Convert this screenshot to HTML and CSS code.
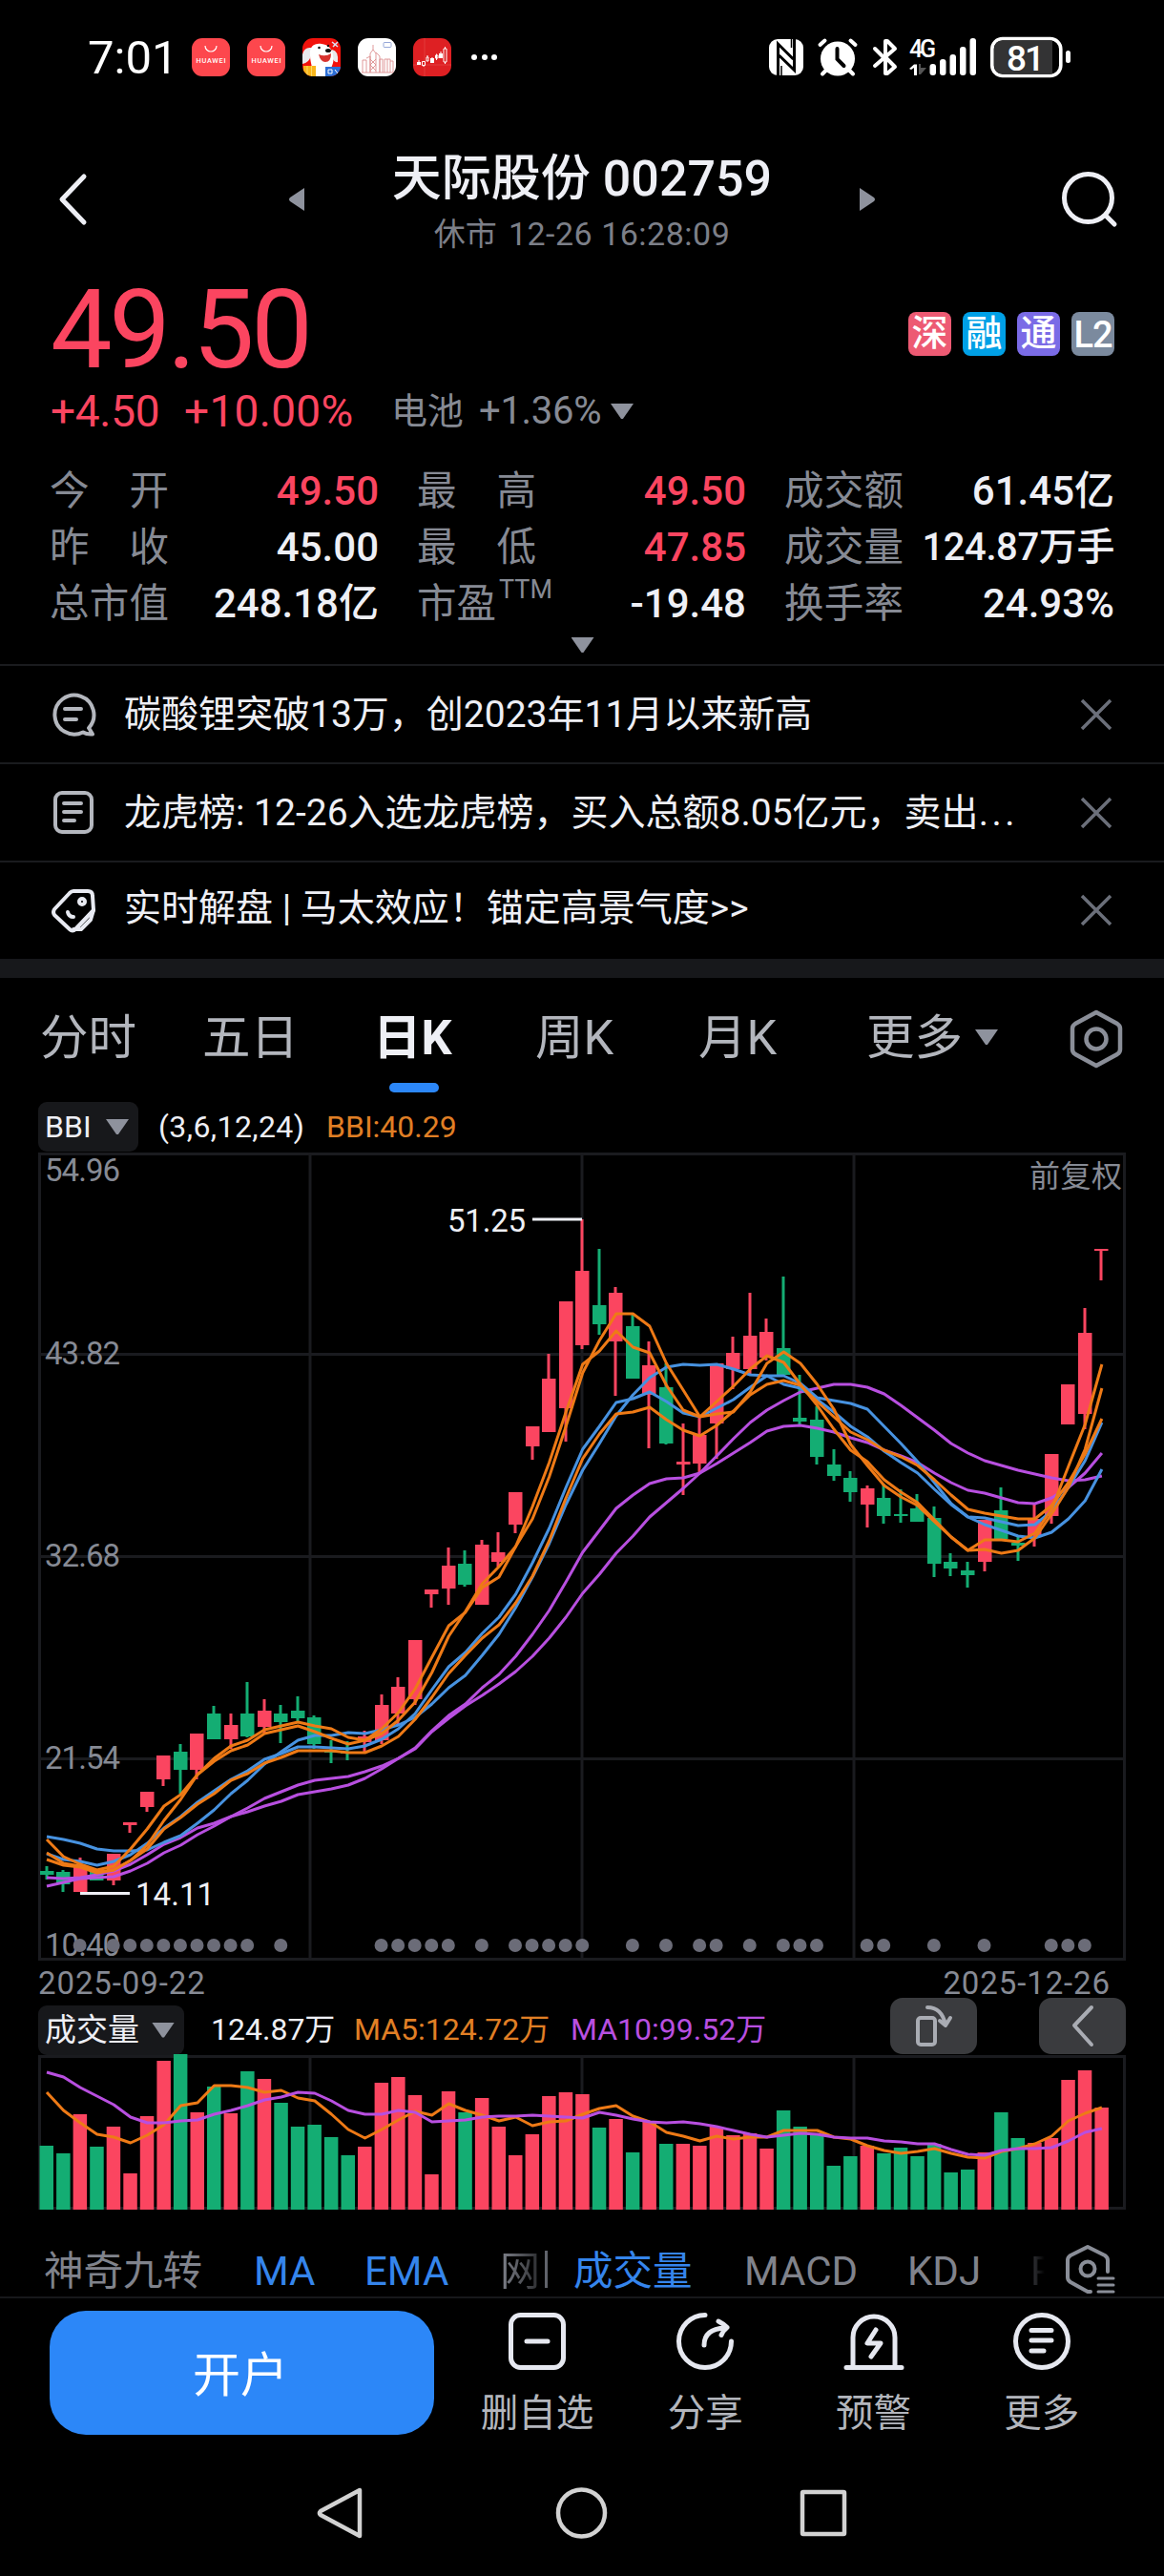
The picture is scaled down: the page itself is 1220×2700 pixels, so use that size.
FILE: index.html
```html
<!DOCTYPE html>
<html lang="zh-CN">
    <head>
        <meta charset="utf-8">
        <meta name="viewport" content="width=device-width, initial-scale=1.0">
        <title>天际股份 002759</title>
        <link rel="stylesheet" href="styles.css">
    </head>
    <body>
        <div class="status">
            <span class="time">7:01</span>
            <div class="apps">
                <svg viewBox="0 0 40 40" width="40" height="40">
                    <rect width="40" height="40" rx="11" fill="#fd474d"/>
                    <path d="M14 8a6 6 0 0 0 12 0" fill="none" stroke="#fff" stroke-width="1.2"/>
                    <text x="4.5" y="26" font-size="7.4" textLength="31" fill="#fff" font-weight="500">HUAWEI</text>
                </svg>
                <svg viewBox="0 0 40 40" width="40" height="40">
                    <rect width="40" height="40" rx="11" fill="#fd474d"/>
                    <path d="M14 8a6 6 0 0 0 12 0" fill="none" stroke="#fff" stroke-width="1.2"/>
                    <text x="4.5" y="26" font-size="7.4" textLength="31" fill="#fff" font-weight="500">HUAWEI</text>
                </svg>
                <svg viewBox="0 0 40 40" width="40" height="40">
                    <clipPath id="round"><rect width="40" height="40" rx="11"/></clipPath>
                    <g clip-path="url(#round)">
                        <rect width="40" height="40" fill="#f2120c"/>
                        <path d="M9 10Q2 9 0 17v10q7-1 9-9zM31 12q7 1 6 13-4 1-6-5z" fill="#e9e9ec"/>
                        <path d="M8 18C7 8 13 5 20 6s12 5 12 13c2 8-3 11-4 21H10C12 32 8 27 8 18z" fill="#fff"/>
                        <path d="M17 17q7 3 13-1 0 9-6 9-5 0-7-8z" fill="#d8322e"/>
                        <ellipse cx="27" cy="13" rx="3" ry="2" fill="#111"/>
                        <circle cx="17.500" cy="10" r="1.300" fill="#111"/>
                        <circle cx="27" cy="8" r="1.200" fill="#111"/>
                        <path d="M31 4l6 5M37 4l-5 5" stroke="#dbe3f5" stroke-width="1.500"/>
                        <path d="M1 29h13v11H1z" fill="#f9b61a"/>
                        <path d="M5 29v11M9.500 29v11" stroke="#ffd866" stroke-width="1"/>
                        <path d="M24 30h16v10H24z" fill="#2b6fd6"/>
                        <path d="M27 33h4v4h-4zM34 33l3 4" stroke="#fff" fill="none"/>
                    </g>
                </svg>
                <svg viewBox="0 0 40 40" width="40" height="40">
                    <rect width="40" height="40" rx="11" fill="#fff"/>
                    <path d="M5 36V23h4v13M9 21l4-2v17M13 36V16l3-4 3 4v20M16 12V7M19 15l4 4v17M23 36V22h3v14M28 36V22h6v14M31 22v14M34 24h3v12M13 22l6 6-6 6M19 22l-6 6 6 6M4 36h33" fill="none" stroke="#dd8f90" stroke-width=".9"/>
                    <rect x="27" y="4.500" width="8" height="5" rx="1" fill="none" stroke="#96a8d8"/>
                </svg>
                <svg viewBox="0 0 40 40" width="40" height="40">
                    <rect width="40" height="40" rx="11" fill="#de2023"/>
                    <path d="M12 0v40M0 28h40" stroke="#e54747" stroke-width=".7"/>
                    <path d="M4 25h4v3H4zM18 21h4v5h-4zM27 16h4v5h-4z" fill="#fff"/>
                    <path d="M9.500 24.500h3v4h-3zM14 20h2v4h-2zM23.500 18h2.500v3h-2.500zM32 11h3v14h-3zM6 23v2M11 28.500v1.500M15 18v2M20 20v1M24.500 16.500V23M29 14v3M33.500 9v2M33.500 25v2" fill="none" stroke="#fff"/>
                </svg>
                <svg viewBox="0 0 30 40" width="30" height="40" fill="#fff">
                    <circle cx="6" cy="20" r="3"/><circle cx="17" cy="20" r="3"/><circle cx="27" cy="20" r="3"/>
                </svg>
            </div>
            <div class="signals">
                <svg viewBox="0 0 36 38" width="36" height="38">
                    <rect width="36" height="38" rx="9" fill="#fff"/>
                    <path d="M9.500 38V5l16 16M26.500 0v32.500L10.500 17" fill="none" stroke="#000" stroke-width="3"/>
                    <path d="M13 28v10M23.500 0v9" stroke="#000" stroke-width="1.500"/>
                </svg>
                <svg viewBox="0 0 42 40" width="42" height="40" fill="none" stroke="#fff" stroke-width="4" stroke-linecap="round">
                    <circle cx="21" cy="21.500" r="18" fill="#fff" stroke="none"/>
                    <path d="M2.500 7l5-4.500M39.500 7l-5-4.500M5 37.500l5-5M37 37.500l-5-5"/>
                    <path d="M20.500 11v11l7 7" stroke="#000"/>
                </svg>
                <svg viewBox="0 0 26 40" width="26" height="40" fill="none" stroke="#fff" stroke-width="4" stroke-linecap="round" stroke-linejoin="round">
                    <path d="M3 11l9 9M3 29l21-18-8-8h-2v16M14 22v15h2l8-7-9-9"/>
                </svg>
                <svg viewBox="0 0 70 40" width="70" height="40" fill="#fff">
                    <text x="0" y="20" font-size="25" font-weight="500" textLength="28">4G</text>
                    <path d="M0 32l5-4.500h3V39H5V31l-3 2z"/>
                    <path d="M10 27h2v4h6l-6 7-2 0z" fill="#555"/>
                    <rect x="21.500" y="27" width="6.500" height="12" rx="3"/>
                    <rect x="32" y="22" width="6.500" height="17" rx="3"/>
                    <rect x="42.500" y="17" width="6.500" height="22" rx="3"/>
                    <rect x="53" y="9" width="6.500" height="30" rx="3"/>
                    <rect x="63.500" y="0" width="6.500" height="39" rx="3"/>
                </svg>
                <svg viewBox="0 0 84 44" width="84" height="44">
                    <rect x="1.800" y="2.500" width="72" height="39" rx="11" fill="#000" stroke="#fff" stroke-width="3.600"/>
                    <path d="M13 4.500h52v35H13q-9 0-9-9v-17q0-9 9-9z" fill="#333334"/>
                    <rect x="79" y="15" width="5" height="13" rx="2.500" fill="#fff"/>
                    <text x="17" y="35.500" font-size="37" font-weight="500" textLength="40" fill="#fff">81</text>
                </svg>
            </div>
        </div>

        <div class="header">
            <svg class="back" viewBox="0 0 30 54" width="30" height="54"><path d="M27 3L4 27l23 24" fill="none" stroke="#eeeff5" stroke-width="5" stroke-linecap="round" stroke-linejoin="round"/></svg>
            <svg viewBox="0 0 16 24" width="16" height="24"><path d="M16 0v24L1 14q-2-2 0-4z" fill="#8e929d"/></svg>
            <div class="title">
                <h1>天际股份 002759</h1>
                <p>休市 <span>12-26 16:28:09</span></p>
            </div>
            <svg viewBox="0 0 16 24" width="16" height="24"><path d="M0 0v24l15-10q2-2 0-4z" fill="#8e929d"/></svg>
            <svg class="search" viewBox="0 0 60 60" width="60" height="60" fill="none" stroke="#eeeff5" stroke-width="5" stroke-linecap="round"><circle cx="28.500" cy="28.500" r="25"/><path d="M47 47l9 9"/></svg>
        </div>

        <div class="quote">
            <div class="priceRow">
                <span class="price">49.50</span>
                <div class="badges">
                    <span class="badge shen">深</span>
                    <span class="badge rong">融</span>
                    <span class="badge tong">通</span>
                    <span class="badge l2">L2</span>
                </div>
            </div>
            <div class="change">
                <span class="diff">+4.50</span>
                <span class="pct">+10.00%</span>
                <span class="sector">电池</span>
                <span class="sectorPct">+1.36%</span>
                <i class="down"></i>
            </div>
            <div class="stats">
                <div><label>今 开</label><b class="up">49.50</b></div>
                <div><label>最 高</label><b class="up">49.50</b></div>
                <div><label>成交额</label><b>61.45亿</b></div>
                <div><label>昨 收</label><b>45.00</b></div>
                <div><label>最 低</label><b class="up">47.85</b></div>
                <div><label>成交量</label><b class="tight">124.87万手</b></div>
                <div><label>总市值</label><b>248.18亿</b></div>
                <div><label class="ttm">市盈<sup>TTM</sup></label><b>-19.48</b></div>
                <div><label>换手率</label><b>24.93%</b></div>
            </div>
            <i class="down expand"></i>
        </div>

        <div class="news">
            <div class="item">
                <svg viewBox="0 0 48 48" width="48" height="48" fill="none" stroke="#b4b7be" stroke-width="4" stroke-linecap="round" stroke-linejoin="round">
                    <path d="M40 38A20.500 20.500 0 1 0 34 42.500Q38 45 44 44.500 42 41 40 38z"/>
                    <path d="M15 18h17M15 29h12"/>
                </svg>
                <p>碳酸锂突破13万，创2023年11月以来新高</p>
                <svg class="close" viewBox="0 0 34 34" width="34" height="34"><path d="M2 2l30 30M32 2L2 32"/></svg>
            </div>
            <div class="item">
                <svg viewBox="0 0 48 48" width="48" height="48" fill="none" stroke="#b4b7be" stroke-width="4" stroke-linecap="round">
                    <rect x="5" y="3" width="38" height="41" rx="7"/>
                    <path d="M14 14h18M14 23h18M14 32h11"/>
                </svg>
                <p>龙虎榜: 12-26入选龙虎榜，买入总额8.05亿元，卖出<span class="dots">...</span></p>
                <svg class="close" viewBox="0 0 34 34" width="34" height="34"><path d="M2 2l30 30M32 2L2 32"/></svg>
            </div>
            <div class="item last">
                <svg viewBox="0 0 48 48" width="48" height="48" fill="none" stroke="#e8eaf2" stroke-width="4" stroke-linecap="round" stroke-linejoin="round">
                    <path d="M24 4h15q5 0 5 5l1 15-19 20q-3 3-6 0L4 29q-2-3 0-6L20 6q2-2 4-2z"/>
                    <path d="M45 24l-3 10-10 10h-8"/>
                    <circle cx="33" cy="15" r="3"/>
                    <path d="M18 26q1 5 6 5"/>
                </svg>
                <p>实时解盘 | 马太效应！锚定高景气度&gt;&gt;</p>
                <svg class="close" viewBox="0 0 34 34" width="34" height="34"><path d="M2 2l30 30M32 2L2 32"/></svg>
            </div>
        </div>

        <div class="tabs">
            <span>分时</span>
            <span>五日</span>
            <span class="active">日K</span>
            <span>周K</span>
            <span>月K</span>
            <span>更多<i class="down"></i></span>
            <svg viewBox="0 0 56 62" width="56" height="62" fill="none" stroke="#8a8e98" stroke-width="4.500" stroke-linejoin="round">
                <path d="M28 3l22 12q3 2 3 5v22q0 3-3 5L28 59 6 47q-3-2-3-5V20q0-3 3-5z"/>
                <circle cx="28" cy="31" r="10.500"/>
            </svg>
        </div>

        <div class="legend">
            <span class="chip bbi">BBI<i class="down"></i></span>
            <span class="params">(3,6,12,24)</span>
            <span class="orange">BBI:40.29</span>
        </div>
        <svg id="kline" width="1140" height="847" viewBox="0 0 1140 847"></svg>
        <div class="dates"><span>2025-09-22</span><span>2025-12-26</span></div>
        <div class="legend vol">
            <span class="chip">成交量<i class="down"></i></span>
            <span class="amount">124.87万</span>
            <span class="orange ma5">MA5:124.72万</span>
            <span class="purple ma10">MA10:99.52万</span>
            <div class="tools">
                <span class="tool">
                    <svg viewBox="0 0 40 46" width="40" height="46" fill="none" stroke="#a9acb3" stroke-width="4" stroke-linecap="round" stroke-linejoin="round"><rect x="3" y="14" width="18" height="28" rx="3"/><path d="M13 3q15 0 19 18M26 17l6 5 5-8"/></svg>
                </span>
                <span class="tool">
                    <svg viewBox="0 0 24 46" width="24" height="46" fill="none" stroke="#a9acb3" stroke-width="4" stroke-linecap="round" stroke-linejoin="round"><path d="M21 3L3 22l18 20"/></svg>
                </span>
            </div>
        </div>
        <svg id="volume" width="1140" height="162" viewBox="0 0 1140 162"></svg>

        <div class="indicators">
            <span class="jz">神奇九转</span>
            <span class="on ma">MA</span>
            <span class="on ema">EMA</span>
            <span class="net">网</span>
            <span class="bar"></span>
            <span class="on cjl">成交量</span>
            <span class="macd">MACD</span>
            <span class="kdj">KDJ</span>
            <span class="rsi">R</span>
            <svg viewBox="0 0 54 54" width="54" height="54" fill="none" stroke="#8a8e98" stroke-width="4" stroke-linejoin="round" stroke-linecap="round">
                <path d="M45 29V17q0-3-3-5L24 3 6 12q-3 2-3 5v18q0 3 3 5l18 10h3"/>
                <circle cx="24" cy="26" r="7.500"/>
                <path d="M35 36h16M35 43h16M35 50h16" stroke-width="3"/>
            </svg>
        </div>

        <div class="bottom">
            <button class="open">开户</button>
            <div class="action">
                <svg viewBox="0 0 64 64" width="64" height="64"><rect x="4.500" y="4.500" width="55" height="55" rx="10"/><path d="M21 32h22"/></svg>
                <span>删自选</span>
            </div>
            <div class="action">
                <svg viewBox="0 0 64 64" width="64" height="64"><path d="M32 4.500A27.500 27.500 0 1 0 59.500 32M31 36q0-17 22-18M46 11q6 3 9 6.500-4 3-6 8"/></svg>
                <span>分享</span>
            </div>
            <div class="action">
                <svg viewBox="0 0 64 64" width="64" height="64"><path d="M10 58V28a22 22 0 0 1 44 0v30M3 59.500h58M34 20l-9 14h14l-10 14"/></svg>
                <span>预警</span>
            </div>
            <div class="action">
                <svg viewBox="0 0 64 64" width="64" height="64"><circle cx="32" cy="32" r="27.500"/><path d="M21 20.500h21M21 31h21M21 42h13"/></svg>
                <span>更多</span>
            </div>
        </div>

        <div class="navbar">
            <svg viewBox="0 0 60 60" width="60" height="60"><path d="M51 6v48L10 32q-2-2 0-4z"/></svg>
            <svg viewBox="0 0 60 60" width="60" height="60"><circle cx="29.500" cy="30" r="24.500"/></svg>
            <svg viewBox="0 0 60 60" width="60" height="60"><rect x="7" y="8" width="44" height="44" rx="1"/></svg>
        </div>
        <script src="script.js"></script>
    </body>
</html>
```
FILE: styles.css
```css
*{
    box-sizing: border-box;
}
html, body{
    margin: 0;
    padding: 0;
    width: 1220px;
    height: 2700px;
    overflow: hidden;
    background-color: #000;
    color: #eeeff5;
    font-family: Roboto, 'Noto Sans CJK SC', sans-serif;
}
svg{
    display: block;
    flex: none;
    overflow: visible;
}
svg text{
    font-family: Roboto, 'Noto Sans CJK SC', sans-serif;
}
h1, p{
    margin: 0;
    font-weight: normal;
}
span, label, b, p, h1{
    white-space: nowrap;
}
.down{
    display: inline-block;
    width: 24px;
    height: 16px;
    background-color: #8e929d;
    clip-path: polygon(0 0, 100% 0, 54% 100%, 46% 100%);
}
.orange{
    color: #e07f25;
}
.purple{
    color: #b84fe0;
}
.up{
    color: #fb4560;
}

/* status bar */
.status{
    height: 120px;
    padding: 0 97px 0 92px;
    display: flex;
    align-items: center;
}
.time{
    width: 109px;
    font-size: 49px;
    color: #fff;
}
.apps{
    display: flex;
    gap: 18px;
}
.signals{
    margin-left: auto;
    margin-right: 1px;
    display: flex;
    align-items: center;
    gap: 15px;
}
.signals svg:nth-child(4){
    margin-left: -2px;
}

/* header */
.header{
    height: 160px;
    padding: 0 48px 0 61px;
    display: flex;
    align-items: center;
}
.header svg{
    margin-top: 18px;
}
.title{
    width: 582px;
    text-align: center;
    padding-top: 25px;
}
.back{
    margin-right: 212px;
}
.search{
    margin-left: auto;
}
.title h1{
    font-size: 52px;
    line-height: 66px;
    font-weight: 500;
}
.title p{
    font-size: 33px;
    line-height: 48px;
    color: #7c7f88;
}
.title p span{
    font-size: 34px;
    margin-left: 4px;
    letter-spacing: 0.5px;
}

/* quote */
.quote{
    height: 416px;
    padding: 0 52px 0 53px;
    display: flex;
    flex-direction: column;
}
.priceRow{
    height: 130px;
    display: flex;
    justify-content: space-between;
    align-items: center;
}
.price{
    font-size: 115px;
    letter-spacing: -3.5px;
    line-height: 130px;
    padding-top: 2px;
    color: #fb4560;
}
.badges{
    display: flex;
    gap: 12px;
    padding-top: 9px;
}
.badge{
    width: 45px;
    height: 46px;
    border-radius: 8px;
    font-size: 38px;
    line-height: 45px;
    text-align: center;
    color: #fff;
    font-weight: 500;
}
.shen{ background-color: #ed5a73; }
.rong{ background-color: #00a0e6; }
.tong{ background-color: #7a6be6; }
.l2{ background-color: #7b8a9e; letter-spacing: -1px; line-height: 49px; }
.change{
    height: 42px;
    display: flex;
    align-items: center;
    font-size: 46px;
    letter-spacing: -0.3px;
    color: #fb4560;
}
.diff{
    width: 140px;
}
.pct{
    width: 217px;
    letter-spacing: 0.3px;
}
.sector, .sectorPct{
    font-size: 38px;
    line-height: 42px;
    color: #868a94;
}
.sector{
    width: 92px;
}
.sectorPct{
    font-size: 40px;
    width: 138px;
}
.stats{
    margin-top: 33px;
    display: grid;
    grid-template-columns: 344px 344px 345px;
    column-gap: 41px;
    grid-auto-rows: 59px;
}
.stats div{
    display: flex;
    justify-content: space-between;
    align-items: center;
}
.stats label{
    width: 125px;
    margin-left: -1px;
    font-size: 41.5px;
    line-height: 59px;
    color: #868a94;
    text-align-last: justify;
}
.stats .ttm{
    text-align-last: left;
}
.stats sup{
    font-size: 27px;
    line-height: 0;
    margin-left: 3px;
    vertical-align: 20px;
}
.stats b{
    font-size: 42px;
    line-height: 59px;
    font-weight: 500;
}
.stats .tight{
    font-size: 40px;
    letter-spacing: -0.4px;
}
.expand{
    margin: 6px auto 0;
}

/* news */
.news{
    border-bottom: 20px solid #17181b;
}
.item{
    height: 103px;
    border-top: 2px solid #1a1b1e;
    padding: 0 54px 0 53px;
    display: flex;
    align-items: center;
}
.item p{
    margin-left: 29px;
    font-size: 39px;
    line-height: 60px;
}
.item .dots{
    letter-spacing: 3.5px;
}
.last p{
    padding-bottom: 5px;
}
.last svg{
    margin-top: -2px;
}
.close{
    margin-left: auto;
    fill: none;
    stroke: #6b6f7a;
    stroke-width: 3.5;
}

/* tabs */
.tabs{
    height: 129px;
    padding-left: 42px;
    display: grid;
    grid-template-columns: 170px 179px 170px 171px 176px 213px 56px;
    font-size: 50.5px;
    line-height: 70px;
    color: #b3b6bd;
    padding-top: 28px;
}
.tabs .down{
    margin-left: 13px;
    vertical-align: 10px;
}
.tabs svg{
    margin-top: 5px;
}
.active{
    color: #eeeff5;
    font-weight: bold;
}
.active::after{
    content: '';
    display: block;
    width: 52px;
    height: 10px;
    border-radius: 5px;
    margin: 12px 0 0 17px;
    background-color: #2c87f8;
}

/* chart */
.legend{
    height: 54px;
    margin: 0 40px;
    display: flex;
    align-items: center;
    font-size: 32px;
    line-height: 54px;
}
.chip{
    width: 153px;
    height: 52px;
    padding: 0 10px 0 7px;
    border-radius: 9px;
    background-color: #17181b;
    display: flex;
    align-items: center;
    justify-content: space-between;
}
.bbi{
    width: 105px;
}
.params{
    width: 176px;
    margin-left: 21px;
    letter-spacing: 0.4px;
}
#kline, #volume{
    margin-left: 40px;
}
.dates{
    height: 46px;
    padding: 0 56px 0 40px;
    display: flex;
    justify-content: space-between;
    align-items: center;
    font-size: 33px;
    letter-spacing: 0.9px;
    padding-top: 1px;
    color: #868a94;
}
.vol{
    height: 53px;
}
.vol > span{
    margin-top: -2px;
}
.vol .chip{
    font-size: 33px;
    margin-top: 0;
}
.amount{
    width: 150px;
    margin-left: 28px;
}
.ma5{
    width: 227px;
}
.tools{
    display: flex;
    gap: 65px;
    margin-left: auto;
    margin-top: -8px;
}
.tool{
    width: 91px;
    height: 59px;
    border-radius: 13px;
    background-color: #3a3b3e;
    display: flex;
    align-items: center;
    justify-content: center;
}

/* indicators */
.indicators{
    height: 93px;
    padding: 34px 0 0 46px;
    border-bottom: 2px solid #17181b;
    display: flex;
    align-items: center;
    font-size: 42px;
    line-height: 60px;
    color: #80838c;
}
.indicators span{
    padding-top: 5px;
}
.on{
    color: #3585ec;
}
.jz{ width: 220px; font-size: 41.5px; }
.ma{ width: 116px; }
.ema{ width: 142px; }
.net{
    width: 42px;
    background: linear-gradient(to right, #80838c, #2a2b2e);
    background-clip: text;
    -webkit-background-clip: text;
    color: transparent;
}
.indicators .bar{
    width: 3px;
    height: 39px;
    padding: 0;
    margin: 0 27px 0 5px;
    background-color: #60636b;
}
.cjl{ width: 179px; font-size: 41.5px; }
.macd{ width: 171px; }
.kdj{ width: 129px; }
.rsi{
    width: 15px;
    margin-right: 21px;
    overflow: hidden;
    background: linear-gradient(to right, #3a3b40, #000);
    background-clip: text;
    -webkit-background-clip: text;
    color: transparent;
}

/* bottom bar */
.bottom{
    height: 159px;
    padding: 13px 40px 0 52px;
    display: flex;
}
.open{
    width: 403px;
    height: 130px;
    margin-right: 20px;
    padding: 0 3px 5px 0;
    border: none;
    border-radius: 38px;
    background-color: #2c87f8;
    color: #fff;
    font-family: inherit;
    font-size: 50px;
}
.action{
    width: 176.4px;
    display: flex;
    flex-direction: column;
    align-items: center;
    font-size: 39.5px;
    line-height: 60px;
    color: #b3b6bd;
}
.action svg{
    fill: none;
    stroke: #e6e8f0;
    stroke-width: 5;
    stroke-linecap: round;
    stroke-linejoin: round;
    margin-bottom: 14px;
}
.navbar{
    display: flex;
    justify-content: center;
    gap: 194px;
    padding-top: 36px;
}
.navbar svg{
    fill: none;
    stroke: #d2d2d2;
    stroke-width: 4.5;
    stroke-linejoin: round;
}
```
FILE: script.js
```js
const RED = '#fb4560', GREEN = '#14ad73', GRID = '#1a1b1f';
const ORANGE = '#ee7a16', BLUE = '#4792e0', PURPLE = '#b84fe0';
const STEP = 17.554;
const FIRST = 8.5;

// direction, then y of high, body top, body bottom, low
const candles = [
    'g748,753,757,762', 'g752,754,767,775', 'r739,749,775,775', 'g754,754,763,763', 'r735,735,763,768',
    'r702,702,705,713', 'r670,670,686,691', 'r632,632,657,664', 'g620,628,647,672', 'r609,609,647,657',
    'g580,588,615,615', 'r588,600,615,625', 'g555,588,612,613', 'r573,585,602,609', 'g579,588,597,619',
    'g570,585,593,597', 'g590,592,620,625', 'g616,627,629,640', 'g617,628,630,637', 'r606,612,618,628',
    'r568,579,616,620', 'r550,560,588,600', 'r511,511,573,579', 'r458,458,463,477', 'r414,433,457,474',
    'g417,431,453,455', 'r406,411,474,474', 'r398,419,429,434', 'r356,356,390,399', 'r287,287,308,322',
    'r211,237,293,293', 'r156,156,268,303', 'r70,124,202,206', 'g101,160,180,191', 'r141,147,198,255',
    'g170,182,237,237', 'r198,223,254,310', 'g221,246,305,306', 'r284,324,327,359', 'r277,296,326,336',
    'r221,221,284,321', 'r193,210,227,248', 'r147,192,227,234', 'r174,188,215,218', 'g130,205,233,233',
    'g233,278,282,287', 'g266,280,319,327', 'g311,327,339,344', 'g334,341,356,366', 'r349,352,369,393',
    'g347,362,381,389', 'g353,379,381,388', 'g358,373,387,387', 'g371,383,431,445', 'g420,429,436,444',
    'g429,438,443,456', 'r385,385,429,439', 'g351,375,405,406', 'g402,409,412,428', 'r367,384,401,413',
    'r316,316,381,389', 'r243,243,285,285', 'r163,189,274,290', 'r101,101,103,134'
];

const lines = [
    [PURPLE, [760,761,760,757,753,746,736,725,718,708,703,696,687,677,670,663,658,656,654,649,643,635,624,606,590,578,561,547,528,505,480,450,419,396,373,359,347,342,341,336,326,315,304,292,287,286,289,293,299,304,312,318,325,336,346,354,357,362,367,368,362,351,336,315]],
    [PURPLE, [769,765,761,760,759,753,745,734,726,715,706,696,691,685,680,673,670,667,663,656,646,635,625,607,593,580,569,557,544,528,509,487,462,442,420,402,382,367,352,336,318,300,283,270,260,251,247,243,243,246,253,265,278,291,305,315,323,328,333,337,341,344,343,339]],
    [BLUE, [717,720,724,730,732,732,731,723,716,703,689,672,658,641,628,616,611,611,608,609,605,600,592,578,561,548,527,505,477,445,410,369,333,305,276,254,236,225,222,223,222,227,233,234,234,242,257,260,263,269,287,305,324,346,368,382,390,396,402,404,398,384,365,332]],
    [BLUE, [735,741,743,747,743,736,724,708,696,681,669,657,648,636,630,623,623,624,625,622,615,604,588,563,539,524,504,487,463,430,394,351,311,287,262,258,251,261,273,277,268,259,246,234,243,247,259,272,287,298,313,325,336,353,369,382,383,387,391,390,376,351,323,283]],
    [ORANGE, [741,747,749,755,752,742,730,709,697,683,672,658,651,640,634,627,627,627,629,629,622,612,594,571,546,527,509,495,472,444,407,362,321,295,274,272,267,280,291,297,286,271,254,243,239,244,261,277,293,301,312,319,328,343,359,374,378,381,384,384,370,346,316,279]],
    [ORANGE, [734,745,748,754,752,742,726,700,678,652,638,627,621,609,605,601,607,614,620,616,609,595,576,545,507,481,452,434,413,384,340,287,231,197,169,169,182,221,249,277,274,272,251,221,209,221,243,269,306,328,349,361,370,387,403,417,416,420,417,404,379,351,311,247]],
    [ORANGE, [720,738,746,752,748,730,709,685,673,652,635,622,616,605,601,597,601,604,613,616,604,587,562,529,496,482,456,445,413,371,325,272,222,208,187,204,210,244,270,277,261,245,227,213,220,243,265,290,312,324,343,356,367,385,403,417,406,406,408,399,374,329,285,222]]
];

const dots = [2,4,5,6,7,8,9,10,11,12,14,20,21,22,23,24,26,28,29,30,31,32,35,37,39,40,42,44,45,46,49,50,53,56,60,61,62];

const volumes = [67,59,100,66,87,38,98,156,163,102,129,101,145,137,112,87,89,76,57,66,133,139,120,37,124,102,117,87,57,79,119,123,121,86,95,60,92,69,69,67,87,78,80,64,104,87,78,46,56,67,59,65,56,69,39,42,60,102,75,70,75,136,146,107];
const ma5 = [39,58,71,83,86,92,84,73,53,50,32,32,34,39,37,45,48,62,78,87,78,68,59,63,51,58,63,69,65,74,70,69,62,56,53,64,70,81,85,90,85,88,86,86,79,79,79,86,88,95,100,103,101,98,103,107,108,101,98,93,85,69,61,55];
const ma10 = [18,23,34,43,52,65,71,71,69,68,62,58,53,47,44,39,40,48,58,62,62,58,60,70,69,68,65,64,64,63,64,65,66,60,63,67,70,71,70,72,75,79,83,86,84,82,83,86,87,87,90,91,93,93,99,104,105,100,98,98,97,90,81,77];

function rect(x, y, w, h, color){
    return `<rect x="${x}" y="${y}" width="${w}" height="${h}" fill="${color}"/>`;
}
function polyline(color, ys){
    let points = ys.map((y, i) => (FIRST + 0.5 + i * STEP).toFixed(1) + ',' + y).join(' ');
    return `<polyline points="${points}" fill="none" stroke="${color}" stroke-width="3" stroke-linejoin="round"/>`;
}
function text(x, y, w, str, color, size){
    return `<text x="${x}" y="${y}" textLength="${w}" font-size="${size || 33}" fill="${color}">${str}</text>`;
}
function grid(h){
    let out = `<rect x="1.5" y="1.5" width="1137" height="${h - 3}" fill="none" stroke="${GRID}" stroke-width="3"/>`;
    [285, 570, 855].forEach(x => out += rect(x - 1.5, 0, 3, h, GRID));
    return out;
}

function drawKline(){
    let out = grid(847);
    [211, 423, 635].forEach(y => out += rect(0, y - 1, 1140, 3, GRID));
    [['54.96', 30], ['43.82', 222], ['32.68', 434], ['21.54', 646], ['10.40', 842]].forEach(l => {
        out += text(7, l[1], 79, l[0], '#868a94');
    });
    out += text(1039, 36, 97, '前复权', '#868a94', 32);
    candles.forEach((c, i) => {
        let color = c[0] == 'r' ? RED : GREEN;
        let [high, top, bottom, low] = c.slice(1).split(',').map(Number);
        let x = Math.round(FIRST + i * STEP);
        out += rect(x - 1.5, high, 3, low - high, color);
        out += rect(x - 7, top, 14.5, bottom - top, color);
    });
    lines.forEach(l => out += polyline(l[0], l[1]));
    dots.forEach(i => {
        out += `<circle cx="${FIRST + i * STEP}" cy="831" r="7" fill="#6b6c78"/>`;
    });
    // highest and lowest price marks
    out += rect(518, 68.5, 52, 3, '#eeeff5') + text(429, 83, 82, '51.25', '#eeeff5');
    out += rect(44, 775, 52, 3, '#eeeff5') + text(102, 789, 83, '14.11', '#eeeff5');
    document.getElementById('kline').innerHTML = out;
}

function drawVolume(){
    let out = grid(162);
    volumes.forEach((v, i) => {
        let color = candles[i][0] == 'r' ? RED : GREEN;
        out += rect((FIRST + i * STEP - 7).toFixed(1), 162 - v, 14.5, v, color);
    });
    out += polyline(ORANGE, ma5) + polyline(PURPLE, ma10);
    document.getElementById('volume').innerHTML = out;
}

drawKline();
drawVolume();
```
